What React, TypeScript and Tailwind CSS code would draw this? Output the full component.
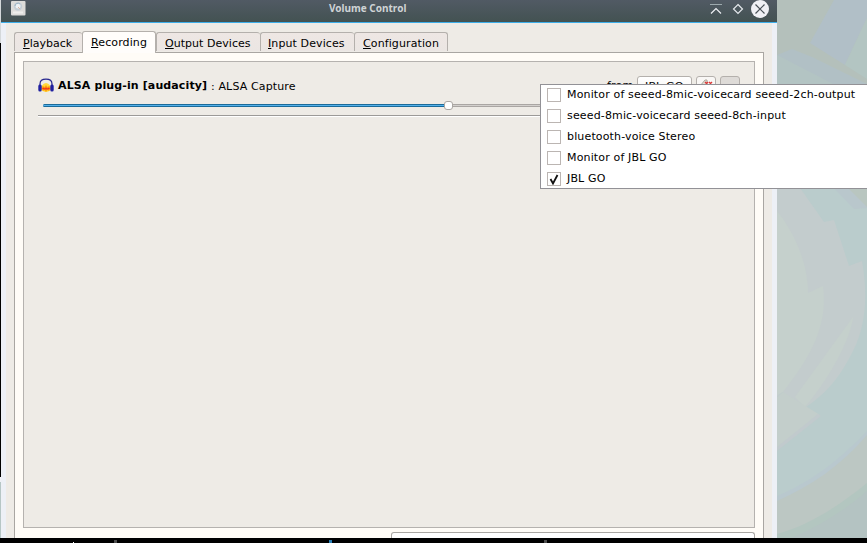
import React from "react";

const tabs = [
  { key: "P", rest: "layback", box: "w-[68px]", pad: "pl-[8px]", sp: "tracking-[0.02px]" },
  { key: "R", rest: "ecording", box: "w-[74px]", pad: "pl-[8px]", sp: "tracking-[0.11px]" },
  { key: "O", rest: "utput Devices", box: "w-[104px]", pad: "pl-[8px]", sp: "tracking-[0.04px]" },
  { key: "I", rest: "nput Devices", box: "w-[94px]", pad: "pl-[7px]", sp: "tracking-[0.1px]" },
  { key: "C", rest: "onfiguration", box: "w-[94px]", pad: "pl-[8px]", sp: "tracking-[0.11px]" },
];

const sources = [
  { name: "Monitor of seeed-8mic-voicecard seeed-2ch-output", on: false },
  { name: "seeed-8mic-voicecard seeed-8ch-input", on: false },
  { name: "bluetooth-voice Stereo", on: false },
  { name: "Monitor of JBL GO", on: false },
  { name: "JBL GO", on: true },
];

function Wallpaper() {
  return (
    <svg className="block h-[538px] w-[90px] shrink-0" viewBox="777 0 90 538">
      <rect x="777" width="90" height="538" fill="#bacccc" />
      <path d="M777 0H867V85H777Z" fill="#b4c0bb" />
      <path d="M834 0H867V18L845 65L810 43Z" fill="#b1bfc7" />
      <path d="M867 18L845 65L867 79Z" fill="#b3c5c2" />
      <path d="M777 55L792 49L812 57L867 84V85H777Z" fill="#b1c0c5" />
      <path d="M777 55L835 85H777Z" fill="#b3c4c3" />
      <path d="M834 188H867V208L854 209Z" fill="#b9c7cc" />
      <path d="M848 188H867V207Z" fill="#b9c6c0" />
      <path d="M777 188H800L824 222L834 220L849 266L862 261C868 295 866 325 853 351C840 377 827 393 806 407L782 392L777 397Z" fill="#c3cccd" />
      <path d="M777 211C794 232 808 263 808 293L823 286C828 326 811 356 783 392L777 395Z" fill="#c5d0cc" />
      <path d="M853 317C851 337 832 375 805 407L795 397Z" fill="#c5d0cc" />
      <path d="M783 392L820 415L777 450V397Z" fill="#c3cecb" />
      <path d="M818 414L821 416L777 451V447Z" fill="#c1cacd" />
      <path d="M867 431C842 458 811 482 777 496V538H867Z" fill="#b9c8ce" />
      <path d="M867 435C842 465 811 486 777 501V538H867Z" fill="#bcc7c3" />
      <path d="M867 483C840 505 810 525 777 534V538H867Z" fill="#b3c6c0" />
      <path d="M867 491C845 510 820 526 791 538H867Z" fill="#b4c3c2" />
    </svg>
  );
}

function TitleBar() {
  return (
    <div className="flex h-[23px] shrink-0 items-start border-b border-[#3daee9] bg-linear-to-b from-[#515a64] to-[#435252]">
      <svg className="ml-[9px] mt-px h-[15px] w-[16px]" viewBox="0 0 16 15">
        <rect x="1" y="0" width="14.5" height="14.5" rx="1" fill="#dddcda" />
        <circle cx="8" cy="5.5" r="4.2" fill="#c4ced6" />
        <circle cx="8" cy="5" r="2.5" fill="#edf1f4" />
        <path d="M5 5a3 3 0 0 1 5-2" stroke="#9bb3c4" fill="none" />
        <path d="M8 6l2 2" stroke="#d9b5a5" />
        <path d="M3 11.5h10" stroke="#eeeeec" strokeWidth="2" />
      </svg>
      <div className="ml-[303px] mt-[2px] w-[78px] whitespace-nowrap font-['Noto_Sans',sans-serif] text-[10px] font-bold leading-[13px] text-[#cfd3d5]">Volume Control</div>
      <svg className="ml-auto mr-px h-[20px] w-[70px]" viewBox="706 0 70 20" fill="none">
        <path d="M710 4.5H722" stroke="#9daaae" />
        <path d="M711 13.5L716 8.5L721 13.5" stroke="#eef0f4" strokeWidth="1.2" />
        <path d="M738 4.5L742.5 9L738 13.5L733.5 9Z" stroke="#e4e8ec" strokeWidth="1.2" />
        <circle cx="760" cy="9" r="9" fill="#eff0f5" />
        <path d="M755.5 4.5L764.5 13.5M764.5 4.5L755.5 13.5" stroke="#485057" strokeWidth="1.2" />
      </svg>
    </div>
  );
}

function Tabs() {
  return (
    <div className="relative z-10 flex h-[21px] items-end">
      {tabs.map((t, i) => (
        <div
          key={t.key}
          className={`${t.box} ${t.pad} ${t.sp} ${
            i === 1
              ? "h-[22px] -mb-px bg-[#fffdfb] pt-[4px]"
              : "h-[19px] mb-[1px] bg-linear-to-b from-[#eee7e4] to-[#ebe6e3] pt-[4px]"
          } ${i === 1 || i === 4 ? "border-r" : ""} shrink-0 whitespace-nowrap rounded-t-[3px] border-l border-t border-[#b4b0ac] text-[11px] leading-[13px]`}
        >
          <span className="underline underline-offset-[1px]">{t.key}</span>
          {t.rest}
        </div>
      ))}
    </div>
  );
}

function Headphones() {
  return (
    <svg className="h-[16px] w-[16px]" viewBox="0 0 16 16">
      <path d="M3.5 8Q8 2 12.5 8V12Q8 16 3.5 12Z" fill="#ffd83a" />
      <path d="M3.5 9L5 8L6.5 9L8 7L9.5 9L11 8L12.5 9V11L11 13L9.5 12L8 14L6.5 12L5 13L3.5 11Z" fill="#ffa012" />
      <path d="M4 10.5L5.5 9.5L7 10.5L8 9L9 10.5L10.5 9.5L12 10.5L10.5 11.5L8 11.5L5.5 11.5Z" fill="#f2331b" />
      <path d="M2 9V6C2 3 4.5 1.2 8 1.2S14 3 14 6V9" fill="none" stroke="#26268e" strokeWidth="1.2" />
      <rect x="0.3" y="6.5" width="3.4" height="7" rx="1.5" fill="#2020a0" />
      <rect x="12.3" y="6.5" width="3.4" height="7" rx="1.5" fill="#2020a0" />
    </svg>
  );
}

function Stream() {
  return (
    <div className="flex h-[56px] flex-col pl-[14px] pt-[14px]">
      <div className="flex h-[23px] items-start">
        <div className="mt-[2px]"><Headphones /></div>
        <div className="ml-[4px] mt-[3px] w-[150px] whitespace-nowrap text-[11px] font-bold leading-[13px] tracking-[0.12px]">ALSA plug-in [audacity]</div>
        <div className="ml-[3px] mt-[4px] w-[88px] whitespace-nowrap text-[11px] leading-[13px] tracking-[0.13px]">: ALSA Capture</div>
        <div className="ml-auto mt-[3px] w-[30px] text-[11px] leading-[13px] tracking-[0.2px]">from</div>
        <div className="h-[20px] w-[55px] rounded-[3px] border border-[#b4b0ac] bg-linear-to-b from-white to-[#f5f3f1] pl-[7px] pt-[3px] text-[11px] leading-[13px] tracking-[0.15px] whitespace-nowrap">JBL GO</div>
        <div className="ml-[4px] h-[20px] w-[20px] rounded-[3px] border border-[#b4b0ac] bg-[#f9f7f5]">
          <svg className="h-[18px] w-[18px]" viewBox="0 0 18 18">
            <path d="M3 9L8 3L10 3V12L3 9" fill="#e3dfd5" stroke="#aaa79d" />
            <path d="M8 5L11 8M11 5L8 8M12 5L15 8M15 5L12 8" stroke="#dc3838" strokeWidth="1.4" />
          </svg>
        </div>
        <div className="ml-[4px] mr-[14px] h-[20px] w-[20px] rounded-[3px] border border-[#b4b0ac] bg-[#dedbd8]" />
      </div>
      <div className="mb-[3px] flex h-[13px] items-center pl-[5px]">
        <div className="h-[3px] w-[401px] rounded-l border-y border-[#1b6b99] bg-[#54b1ec]" />
        <div className="h-[9px] w-[9px] rounded-[3px] border border-[#aaa6a2] bg-white" />
        <div className="mr-[14px] h-[3px] flex-1 border-y border-[#aaa6a3] bg-[#d3d0cd]" />
      </div>
      <div className="mr-[14px] h-[2px] border-t border-[#9c9a98] bg-white" />
    </div>
  );
}

function SourceMenu() {
  return (
    <div className="absolute left-[540px] top-[84px] z-20 h-[105px] w-[327px] border-y border-l border-[#929196] bg-white">
      {sources.map((s) => (
        <div key={s.name} className="flex h-[21px] items-start pl-[6px]">
          <div className="mt-[3px] h-[14px] w-[14px] border border-[#bbb5b2] bg-white">
            {s.on && (
              <svg className="h-[12px] w-[12px]" viewBox="0 0 12 12" fill="none">
                <path d="M2.5 6L5 10.5L9.5 2" stroke="#111" strokeWidth="1.8" />
              </svg>
            )}
          </div>
          <div className="ml-[6px] mt-[3px] whitespace-nowrap text-[11px] leading-[13px] tracking-[0.15px]">{s.name}</div>
        </div>
      ))}
    </div>
  );
}

export default function App() {
  return (
    <div className="relative flex h-[543px] w-[867px] flex-col overflow-hidden bg-black font-['DejaVu_Sans',sans-serif] text-black">
      <div className="flex h-[538px]">
        <div className="flex w-px shrink-0 flex-col">
          <div className="h-[43px] bg-[#d4d8da]" />
          <div className="h-[434px] bg-black" />
          <div className="h-[5px] bg-[#eff0f5]" />
          <div className="flex-1 bg-[#b6c6c5]" />
        </div>
        <div className="flex w-[776px] shrink-0 flex-col">
          <TitleBar />
          <div className="flex h-[515px] flex-col border-x-[5px] border-[#edf0f6] bg-[#eeebe6] px-[8px] pt-[8px]">
            <Tabs />
            <div className="flex h-[486px] w-[750px] flex-col border-x border-t border-[#a9a6a2] bg-[#fffcf7] px-[8px] pt-[8px]">
              <div className="h-[467px] w-[732px] shrink-0 border border-[#b5b2af] bg-[#eeebe6]">
                <Stream />
              </div>
              <div className="ml-[368px] mt-[4px] h-[6px] w-[364px] rounded-t-[3px] border-x border-t border-[#a9a6a2] bg-white" />
            </div>
          </div>
        </div>
        <Wallpaper />
      </div>
      <div className="flex h-[5px] items-start bg-black">
        <div className="ml-[73px] mt-[4px] h-px w-px bg-white" />
        <div className="ml-[40px] mt-[2px] h-[3px] w-[3px] bg-[#4c4c4c]" />
        <div className="ml-[212px] mt-[2px] h-[3px] w-[3px] bg-[#2980b9]" />
        <div className="ml-[212px] mt-[2px] h-[3px] w-[3px] bg-[#4c4c4c]" />
      </div>
      <SourceMenu />
    </div>
  );
}
